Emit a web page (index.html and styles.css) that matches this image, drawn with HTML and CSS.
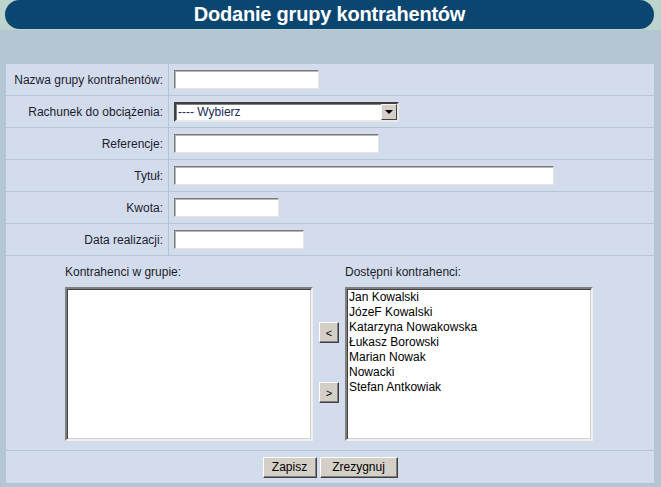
FILE: index.html
```html
<!DOCTYPE html>
<html lang="pl">
<head>
<meta charset="utf-8">
<title>Dodanie grupy kontrahentów</title>
<link rel="stylesheet" href="styles.css">
</head>
<body>
<div class="header-strip">
  <div class="pill">Dodanie grupy kontrahentów</div>
</div>
<div class="form">
  <div class="label">Nazwa grupy kontrahentów:</div>
  <div class="field"><input class="text w145" type="text"></div>

  <div class="label">Rachunek do obciążenia:</div>
  <div class="field">
    <div class="select">
      <span class="select-text">---- Wybierz</span>
      <span class="select-btn"><span class="tri"></span></span>
    </div>
  </div>

  <div class="label">Referencje:</div>
  <div class="field"><input class="text w205" type="text"></div>

  <div class="label">Tytuł:</div>
  <div class="field"><input class="text w380" type="text"></div>

  <div class="label">Kwota:</div>
  <div class="field"><input class="text w105" type="text"></div>

  <div class="label">Data realizacji:</div>
  <div class="field"><input class="text w130" type="text"></div>

  <div class="lists">
    <div class="list-col">
      <div class="list-label">Kontrahenci w grupie:</div>
      <div class="listbox"></div>
    </div>
    <div class="mover">
      <button class="btn small">&lt;</button>
      <button class="btn small">&gt;</button>
    </div>
    <div class="list-col">
      <div class="list-label">Dostępni kontrahenci:</div>
      <div class="listbox">
        <div class="opt">Jan Kowalski</div>
        <div class="opt">JózeF Kowalski</div>
        <div class="opt">Katarzyna Nowakowska</div>
        <div class="opt">Łukasz Borowski</div>
        <div class="opt">Marian Nowak</div>
        <div class="opt">Nowacki</div>
        <div class="opt">Stefan Antkowiak</div>
      </div>
    </div>
  </div>

  <div class="actions">
    <button class="btn save">Zapisz</button>
    <button class="btn cancel">Zrezygnuj</button>
  </div>
</div>
</body>
</html>
```

FILE: styles.css
```css
html, body {
  margin: 0;
  padding: 0;
}
body {
  background: #b4c6d4;
  font-family: "Liberation Sans", Arial, sans-serif;
  font-size: 12px;
  color: #1c1c2c;
}
.header-strip {
  background: #bdd3cd;
  height: 30px;
  padding: 0 7px 0 5px;
}
.pill {
  height: 29px;
  background: #0b4670;
  border-radius: 15px;
  color: #fff;
  font-weight: bold;
  font-size: 20px;
  line-height: 29px;
  text-align: center;
  letter-spacing: -0.2px;
}
.form {
  margin: 34px 7px 4px 6px;
  display: grid;
  grid-template-columns: 162px 1fr;
  grid-template-rows: repeat(6, 31px) 194px 32px;
  gap: 1px;
  background: #b4c6d4;
}
.label {
  background: #d3dcec;
  display: flex;
  align-items: center;
  justify-content: flex-end;
  padding-right: 5px;
}
.field {
  background: #d3dcec;
  display: flex;
  align-items: center;
  padding-left: 5px;
}
.text {
  box-sizing: border-box;
  height: 19px;
  margin: 0;
  padding: 0 2px;
  background: #fff;
  border: 1px solid;
  border-color: #7c7c7c #e4e4e4 #e4e4e4 #7c7c7c;
  box-shadow: inset 1px 1px 0 #b8b8b8;
  font: inherit;
}
.w145 { width: 145px; }
.w205 { width: 205px; }
.w380 { width: 380px; }
.w105 { width: 105px; }
.w130 { width: 130px; }

.select {
  box-sizing: border-box;
  width: 225px;
  height: 20px;
  background: #fff;
  border: 2px solid;
  border-color: #404040 #e8e8e8 #e8e8e8 #404040;
  box-shadow: inset 1px 1px 0 #808080;
  display: flex;
  align-items: center;
  justify-content: space-between;
  padding-left: 2px;
}
.select-text {
  color: #1a2a5a;
}
.select-btn {
  box-sizing: border-box;
  width: 16px;
  height: 16px;
  background: #d4d0c8;
  border: 1px solid;
  border-color: #f4f4f4 #404040 #404040 #f4f4f4;
  display: flex;
  align-items: center;
  justify-content: center;
}
.tri {
  width: 0;
  height: 0;
  border-left: 4px solid transparent;
  border-right: 4px solid transparent;
  border-top: 4px solid #000;
}

.lists {
  grid-column: 1 / -1;
  background: #d3dcec;
  display: flex;
  justify-content: center;
  align-items: flex-end;
  gap: 6px;
  padding: 9px 2px 9px 0;
  box-sizing: border-box;
}
.list-col {
  display: flex;
  flex-direction: column;
}
.list-label {
  line-height: 14px;
  margin-bottom: 8px;
}
.listbox {
  box-sizing: border-box;
  width: 248px;
  height: 154px;
  background: #fff;
  border: 2px solid;
  border-color: #808080 #f0f0f0 #f0f0f0 #808080;
  box-shadow: inset 1px 1px 0 #404040, inset -1px -1px 0 #d4d0c8;
  padding: 1px 0 0 2px;
  color: #000;
}
.opt {
  line-height: 15px;
  white-space: nowrap;
}
.mover {
  height: 154px;
  display: flex;
  flex-direction: column;
  justify-content: center;
  gap: 39px;
  padding-bottom: 3px;
  box-sizing: border-box;
}
.btn {
  box-sizing: border-box;
  margin: 0;
  background: #d4d0c8;
  border: 1px solid;
  border-color: #ffffff #404040 #404040 #ffffff;
  box-shadow: inset -1px -1px 0 #808080;
  font-family: "Liberation Sans", Arial, sans-serif;
  font-size: 12px;
  color: #000;
  padding: 0;
}
.small {
  width: 20px;
  height: 21px;
  font-size: 11px;
}
.actions {
  grid-column: 1 / -1;
  background: #d3dcec;
  display: flex;
  justify-content: center;
  align-items: center;
  gap: 3px;
}
.save {
  width: 54px;
  height: 21px;
}
.cancel {
  width: 78px;
  height: 21px;
}
```
